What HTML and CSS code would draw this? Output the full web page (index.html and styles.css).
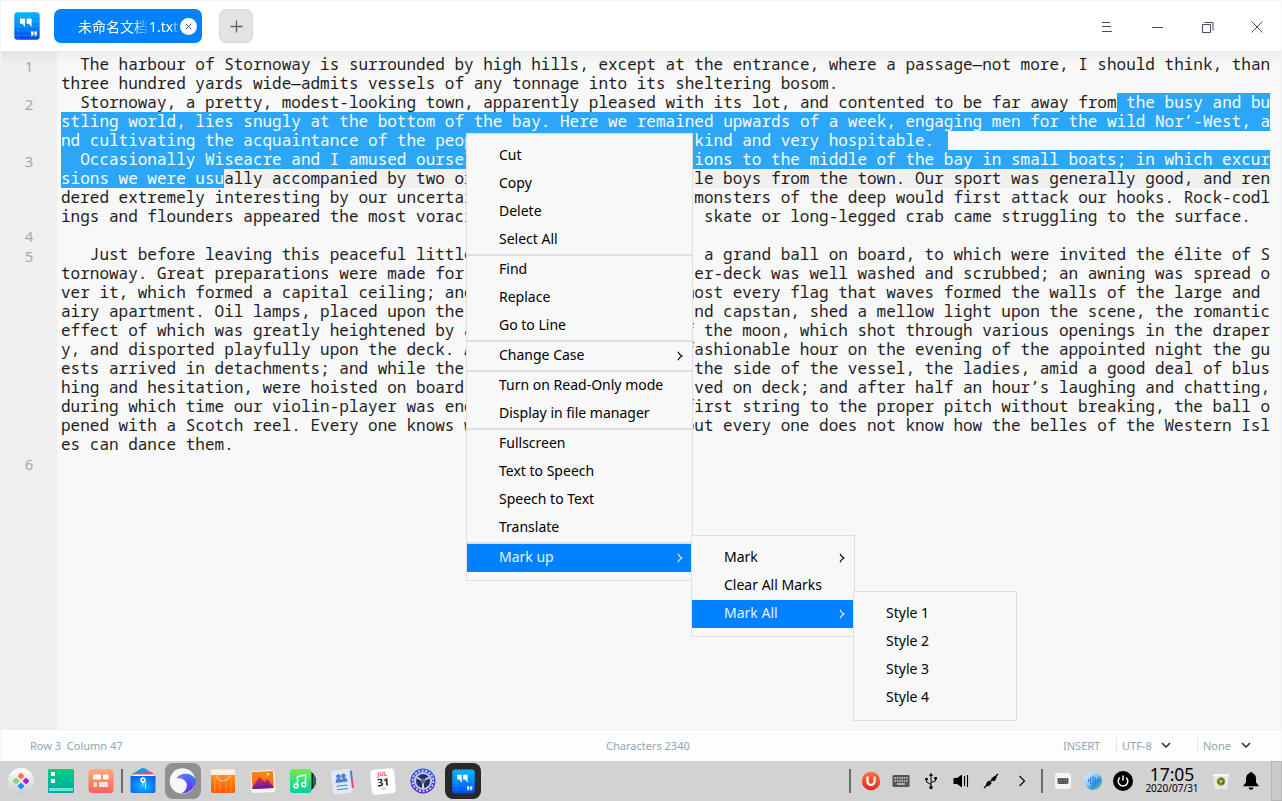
FILE: index.html
```html
<!DOCTYPE html>
<html lang="en">
<head>
<meta charset="utf-8">
<title>Text Editor</title>
<link rel="stylesheet" href="styles.css">
</head>
<body>
<svg class="defs" width="0" height="0">
  <defs>
    <linearGradient id="gEd" x1="0" y1="0" x2="0" y2="1"><stop offset="0" stop-color="#00b4ff"/><stop offset=".5" stop-color="#0088ff"/><stop offset="1" stop-color="#0046e8"/></linearGradient>
    <linearGradient id="gTeal" x1="0" y1="0" x2="0" y2="1"><stop offset="0" stop-color="#00d074"/><stop offset="1" stop-color="#00a7b8"/></linearGradient>
    <linearGradient id="gPeach" x1="0" y1="0" x2="0" y2="1"><stop offset="0" stop-color="#ffad78"/><stop offset="1" stop-color="#fd605c"/></linearGradient>
    <linearGradient id="gGrey" x1="0" y1="0" x2="0" y2="1"><stop offset="0" stop-color="#fff"/><stop offset="1" stop-color="#c4ced2"/></linearGradient>
    <radialGradient id="gFile" cx=".5" cy=".6" r=".6"><stop offset="0" stop-color="#1fb7ff"/><stop offset="1" stop-color="#0566f2"/></radialGradient>
    <linearGradient id="gWave" x1="0" y1="0" x2="1" y2="1"><stop offset="0" stop-color="#8d7bff"/><stop offset=".5" stop-color="#4b5bff"/><stop offset="1" stop-color="#7a10ff"/></linearGradient>
    <linearGradient id="gBag" x1="0" y1="0" x2="0" y2="1"><stop offset="0" stop-color="#ff9a1e"/><stop offset="1" stop-color="#ff5400"/></linearGradient>
    <linearGradient id="gSun" x1="0" y1="0" x2="0" y2="1"><stop offset="0" stop-color="#f58a12"/><stop offset="1" stop-color="#f9601e"/></linearGradient>
    <linearGradient id="gMt" x1="0" y1="0" x2="0" y2="1"><stop offset="0" stop-color="#f0383c"/><stop offset="1" stop-color="#5b12b8"/></linearGradient>
    <linearGradient id="gMus" x1="0" y1="0" x2="0" y2="1"><stop offset="0" stop-color="#73ec4a"/><stop offset="1" stop-color="#00cfa8"/></linearGradient>
    <linearGradient id="gGear" x1="0" y1="0" x2="0" y2="1"><stop offset="0" stop-color="#2a55e8"/><stop offset="1" stop-color="#4a20d8"/></linearGradient>
    <linearGradient id="gU" x1="0" y1="0" x2="0" y2="1"><stop offset="0" stop-color="#ff7040"/><stop offset="1" stop-color="#e52a20"/></linearGradient>
    <linearGradient id="gVoice" x1="0" y1="0" x2="1" y2="1"><stop offset="0" stop-color="#e6f3fb"/><stop offset=".45" stop-color="#8fd0f5"/><stop offset=".65" stop-color="#2f8fe8"/><stop offset="1" stop-color="#7be04a"/></linearGradient>
    <symbol id="edicon" viewBox="0 0 26 28">
      <rect x=".3" y=".3" width="25.4" height="27.4" rx="3.2" fill="url(#gEd)"/>
      <path d="M0 4.500h26M0 9.500h26M0 14.500h26M0 19h26M0 23.500h26M4.500 0v28" stroke="#7fd4ff" stroke-opacity=".25" stroke-width=".7"/>
      <path d="M6 6.400h5v8.600L8.400 11.800H6zM12.600 6.400h5v8.600L15 11.800h-2.400z" fill="#fff"/>
      <path d="M17 19.600h2.600v2.600l-1.500 2H17l.8-2H17zM20.400 19.600H23v2.600l-1.500 2h-1.100l.8-2h-.8z" fill="#fff"/>
    </symbol>
    <symbol id="chev" viewBox="0 0 6 10"><path d="M1 .7q1 2.800 4 4.300q-3 1.500-4 4.300" fill="none" stroke="currentColor" stroke-width="1.100"/></symbol>
    <symbol id="down" viewBox="0 0 10 6"><path d="M1 1l4 4 4-4" fill="none" stroke="currentColor" stroke-width="1.600"/></symbol>
  </defs>
</svg>

<div class="window">
  <header class="titlebar">
    <svg class="app-logo" width="26" height="28"><use href="#edicon"/></svg>
    <div class="tab">
      <span class="tab-name">未命名文档</span><span class="tab-ext">1.txt</span>
      <span class="tab-close"><svg width="7" height="7" viewBox="0 0 7 7"><path d="M.7.7l5.600 5.600M6.300.7L.7 6.300" stroke="#455060" stroke-width="1"/></svg></span>
    </div>
    <div class="add"><svg width="13" height="13" viewBox="0 0 13 13"><path d="M6.500.5v12M.5 6.500h12" stroke="#5a6478" stroke-width="1.300"/></svg></div>
    <div class="controls">
      <svg width="12" height="14" viewBox="0 0 12 14"><path d="M1 3.500h8M1 7.500h9M1 12.500h10" stroke="#414d68"/></svg>
      <svg width="12" height="14" viewBox="0 0 12 14"><path d="M1 8.500h11" stroke="#414d68"/></svg>
      <svg width="13" height="14" viewBox="0 0 13 14"><path d="M1.500 5.500h8v8h-8zM3.500 3.500h8.500v8" fill="none" stroke="#414d68"/></svg>
      <svg width="12" height="14" viewBox="0 0 12 14"><path d="M.5 2.500l11 11M11.500 2.500l-11 11" stroke="#414d68"/></svg>
    </div>
  </header>

  <main class="editor">
    <div class="gutter">
      <span class="n two">1</span><span class="n three">2</span><span class="n six">3</span><span class="n one">4</span><span class="n eleven">5</span><span class="n">6</span>
    </div>
    <div class="text">
      <div class="row"><span>  The harbour of Stornoway is surrounded by high hills, except at the entrance, where a passage—not more, I should think, than</span></div>
      <div class="row"><span>three hundred yards wide—admits vessels of any tonnage into its sheltering bosom.</span></div>
      <div class="row"><span>  Stornoway, a pretty, modest-looking town, apparently pleased with its lot, and contented to be far away from</span><span class="sel"> the busy and bu</span></div>
      <div class="row"><span class="sel">stling world, lies snugly at the bottom of the bay. Here we remained upwards of a week, engaging men for the wild Nor’-West, a</span></div>
      <div class="row"><span class="sel head">nd cultivating the acquaintance of the peop</span><span class="sel eol">kind and very hospitable. </span></div>
      <div class="row"><span class="sel head">  Occasionally Wiseacre and I amused oursel</span><span class="sel">ions to the middle of the bay in small boats; in which excur</span></div>
      <div class="row current"><span class="head"><span class="sel">sions we were usu</span>ally accompanied by two or</span><span>le boys from the town. Our sport was generally good, and ren</span></div>
      <div class="row"><span class="head">dered extremely interesting by our uncertai</span><span>monsters of the deep would first attack our hooks. Rock-codl</span></div>
      <div class="row"><span class="head">ings and flounders appeared the most voraci</span><span> skate or long-legged crab came struggling to the surface.</span></div>
      <div class="row"></div>
      <div class="row"><span class="head">   Just before leaving this peaceful little</span><span> a grand ball on board, to which were invited the élite of S</span></div>
      <div class="row"><span class="head">tornoway. Great preparations were made for </span><span>er-deck was well washed and scrubbed; an awning was spread o</span></div>
      <div class="row"><span class="head short">ver it, which formed a capital ceiling; and</span><span>most every flag that waves formed the walls of the large and</span></div>
      <div class="row"><span class="head">airy apartment. Oil lamps, placed upon the </span><span>nd capstan, shed a mellow light upon the scene, the romantic</span></div>
      <div class="row"><span class="head short">effect of which was greatly heightened by a</span><span>f the moon, which shot through various openings in the draper</span></div>
      <div class="row"><span class="head short">y, and disported playfully upon the deck. A</span><span>fashionable hour on the evening of the appointed night the gu</span></div>
      <div class="row"><span class="head">ests arrived in detachments; and while the </span><span>the side of the vessel, the ladies, amid a good deal of blus</span></div>
      <div class="row"><span class="head">hing and hesitation, were hoisted on board </span><span>ved on deck; and after half an hour’s laughing and chatting,</span></div>
      <div class="row"><span class="head short">during which time our violin-player was end</span><span>first string to the proper pitch without breaking, the ball o</span></div>
      <div class="row"><span class="head short">pened with a Scotch reel. Every one knows w</span><span>but every one does not know how the belles of the Western Isl</span></div>
      <div class="row"><span>es can dance them.</span></div>
    </div>
  </main>

  <footer class="status">
    <span class="pos">Row 3&nbsp; Column 47</span>
    <span class="chars">Characters 2340</span>
    <div class="modes">
      <span class="mode-ins">INSERT</span>
      <span class="mode enc">UTF-8<svg width="10" height="6"><use href="#down"/></svg></span>
      <span class="mode hl">None<svg width="10" height="6"><use href="#down"/></svg></span>
    </div>
  </footer>
</div>

<nav class="taskbar">
  <div class="dock">
    <div class="slot"><svg width="28" height="28" viewBox="0 0 28 28"><circle cx="14" cy="14" r="13" fill="url(#gGrey)"/><rect x="11.500" y="6.500" width="5" height="5" rx="1" transform="rotate(45 14 9)" fill="#ff7043"/><rect x="6.500" y="11.500" width="5" height="5" rx="1" transform="rotate(45 9 14)" fill="#8fd16a"/><rect x="16.500" y="11.500" width="5" height="5" rx="1" transform="rotate(45 19 14)" fill="#b517e0"/><rect x="11.500" y="16.500" width="5" height="5" rx="1" transform="rotate(45 14 19)" fill="#1a8cf0"/></svg></div>
    <div class="slot"><svg width="28" height="28" viewBox="0 0 28 28"><rect x="1" y="2" width="26" height="24" rx="1.500" fill="url(#gTeal)"/><path d="M4 5h4v4H4zM4 12h4v4H4z" fill="#fff"/><path d="M2 21h24v3H2z" fill="#70e8c4"/></svg></div>
    <div class="slot"><svg width="28" height="28" viewBox="0 0 28 28"><rect x="1.500" y="2" width="25" height="24" rx="4" fill="url(#gPeach)"/><g fill="#fff"><rect x="6" y="7.500" width="8" height="5" rx="1"/><rect x="16" y="7.500" width="5.500" height="5" rx="1"/><rect x="6.500" y="15" width="3.500" height="5" rx="1" opacity=".7"/><rect x="12" y="15" width="9" height="5" rx="1" opacity=".8"/></g></svg></div>
    <i class="bar dock-bar"></i>
    <div class="slot"><svg width="28" height="28" viewBox="0 0 28 28"><path d="M2 8L12 1.500q2-1 4 0L26 8z" fill="#0a9cf5"/><path d="M4 6l19-1 2 4H4z" fill="#ef4a66"/><path d="M4 7.500h21V10H4z" fill="#fff"/><path d="M1.500 9h25v15q0 2-2 2h-21q-2 0-2-2z" fill="url(#gFile)"/><path d="M14 15v3.500M16.500 15v7" stroke="#bde4ff" stroke-width="1.100"/><circle cx="14" cy="13" r="1.900" fill="none" stroke="#fff" stroke-width="1.500"/></svg></div>
    <div class="slot on"><svg width="28" height="28" viewBox="0 0 28 28"><circle cx="13.500" cy="14" r="12.800" fill="#f6f7f8"/><path d="M7.500 11C11 5.500 22 4.500 26.800 12.500 27 20 21 26.500 12 26.600c8-3.600 9-15.600-4.500-15.600z" fill="url(#gWave)"/><path d="M12 9.500c8-1.500 11 3 11 11 2-3 3-5 2.500-8C22 6 16 6.500 12 9.500z" fill="#367df2" opacity=".8"/></svg></div>
    <div class="slot"><svg width="28" height="28" viewBox="0 0 28 28"><path d="M2 6h24v18q0 2-2 2H4q-2 0-2-2z" fill="url(#gBag)"/><path d="M6 9v17M11 9v17M17 9v17M22 9v17" stroke="#ffa04a" stroke-opacity=".4" stroke-width="2"/><path d="M2 3.500q0-1 1-1h22q1 0 1 1V8H2z" fill="#fff1e4"/><path d="M7 6.500C8 16.500 20 16.500 21 6.500" fill="none" stroke="#f6d2b4" stroke-width="1.200"/></svg></div>
    <div class="slot"><svg width="28" height="28" viewBox="0 0 28 28"><g transform="rotate(-3 14 14)"><rect x="2" y="3.500" width="24" height="22" rx="3" fill="#fff7ee"/><rect x="3" y="4.500" width="21.500" height="17" rx="1" fill="url(#gSun)"/><path d="M3 20.500L10.500 9l5 6 3-3 6 9.500H3z" fill="url(#gMt)"/><circle cx="19.500" cy="7.500" r="1.200" fill="#ffe8c0"/></g></svg></div>
    <div class="slot"><svg width="28" height="28" viewBox="0 0 28 28"><circle cx="16" cy="14" r="11" fill="#12151a"/><path d="M24 7q3 3 3 7t-3 7z" fill="#1a6e54"/><rect x="1" y="2" width="21.500" height="24" rx="3" fill="url(#gMus)"/><path d="M8.500 19V9.500l8-1.500v9.500" fill="none" stroke="#fff" stroke-width="1.500"/><circle cx="7" cy="19" r="2" fill="none" stroke="#fff" stroke-width="1.300"/><circle cx="14.800" cy="17.700" r="2" fill="none" stroke="#fff" stroke-width="1.300"/></svg></div>
    <div class="slot"><svg width="28" height="28" viewBox="0 0 28 28"><g transform="rotate(-7 14 14)"><path d="M20 5h4v5h-4z" fill="#3380e8"/><path d="M20 10h4v5h-4z" fill="#8c55d8"/><path d="M20 15h4v7h-4z" fill="#f04a5c"/><rect x="3" y="2.500" width="19" height="24" rx="2.500" fill="#dfe8fb"/><g fill="#4a7fd4"><circle cx="10" cy="9" r="2.300"/><circle cx="15" cy="9" r="2.300"/><path d="M6.500 15q0-4 3.500-4t3 2q0-2 2-2 3.500 0 3.500 4z"/><path d="M7 18h11v1H7zM7 21.500h11v1H7z"/></g></g></svg></div>
    <div class="slot"><div class="cal"><b>JUL</b><strong>31</strong><small>FRI</small></div></div>
    <div class="slot"><svg width="28" height="28" viewBox="0 0 28 28"><circle cx="14" cy="14" r="12.500" fill="url(#gGear)"/><circle cx="14" cy="14" r="10.400" fill="none" stroke="#d5ddf2" stroke-width="1.800" stroke-dasharray="2.200 1.430"/><circle cx="14" cy="14" r="9" fill="#c6cfe0"/><circle cx="14" cy="14" r="7" fill="#233062"/><path d="M14 14V21M14 14L8 10.500M14 14L20 10.500" stroke="#cbd4e8" stroke-width="2"/><circle cx="14" cy="14" r="2.500" fill="#5f6d98"/></svg></div>
    <div class="slot on dark"><svg width="23" height="25"><use href="#edicon"/></svg></div>
  </div>
  <div class="tray">
    <i class="bar first"></i>
    <svg width="20" height="20" viewBox="0 0 20 20"><circle cx="10" cy="10" r="9.200" fill="url(#gU)"/><path d="M6.500 5.500v5a3.500 3.500 0 0 0 7 0v-5" fill="none" stroke="#fff" stroke-width="2.200"/></svg>
    <svg width="18" height="20" viewBox="0 0 18 20"><rect x=".5" y="4" width="17" height="12" rx="1.200" fill="#555"/><path d="M2.500 7h13M2.500 10h13" stroke="#d2d2d2" stroke-width="1.500" stroke-dasharray="1.500 .8"/><path d="M5 13h8" stroke="#d2d2d2" stroke-width="1.500"/></svg>
    <svg width="14" height="18" viewBox="0 0 14 18"><path d="M7 3v12M7 12.500L2.500 10V7.500M7 10.500l4.500-1.500V6.500" fill="none" stroke="#000" stroke-width="1"/><path d="M7 .7L9 4H5z"/><circle cx="7" cy="15.500" r="1.700"/><circle cx="2.500" cy="7.200" r="1.400"/><path d="M10.300 5h2.600v2.600h-2.600z"/></svg>
    <svg width="18" height="16" viewBox="0 0 18 16"><path d="M1.500 5h3.500L10 1.500v13L5 11H1.500z"/><path d="M12.500 3v10M15.500 2v12" stroke="#000" stroke-width="1.100"/></svg>
    <svg width="16" height="16" viewBox="0 0 16 16"><path d="M1 15L15 1" stroke="#000" stroke-width="1.200"/><path d="M3 12.500q0-3.500 3-5l2.700 2.700q-2 3-5 3zM8 6q2-3 5.500-3.500.5 4-3 6z"/></svg>
    <svg width="8" height="12" viewBox="0 0 8 12"><path d="M1.500 1l5 5-5 5" fill="none" stroke="#111" stroke-width="1.300"/></svg>
    <i class="bar"></i>
    <svg width="16" height="18" viewBox="0 0 16 18"><rect y="1" width="16" height="16" rx="3" fill="#f4f4f4"/><rect x="2.500" y="6" width="11" height="6" fill="#777"/><path d="M3 7.500h10M3 9.500h10M4.500 11.300h7" stroke="#222" stroke-dasharray="1 .8"/></svg>
    <svg width="18" height="18" viewBox="0 0 18 18"><circle cx="9" cy="9" r="9" fill="url(#gVoice)"/><path d="M4.500 7v3M6.700 5v7M9 3.500V14M11.200 5v7M13.500 7v3" stroke="#297fd8" stroke-width="1.200"/></svg>
    <svg width="20" height="20" viewBox="0 0 20 20"><circle cx="10" cy="10" r="10"/><path d="M7 6.500a4.800 4.800 0 1 0 6 0M10 4.500v5" fill="none" stroke="#fff" stroke-width="1.500"/></svg>
    <div class="clock"><span class="time">17:05</span><span class="date">2020/07/31</span></div>
    <svg width="16" height="17" viewBox="0 0 16 17"><path d="M0 1h16l-1.800 15H1.800z" fill="#e6e9e6"/><path d="M0 1h16v2H.3z" fill="#f7f8f7"/><circle cx="8" cy="8.500" r="2.700" fill="#c7d59c" stroke="#8a9c1c" stroke-width="3"/><circle cx="8" cy="8.500" r="2.600" fill="none" stroke="#47611a" stroke-width="1.300" stroke-dasharray="3.500 1.950"/></svg>
    <svg width="16" height="18" viewBox="0 0 16 18"><path d="M8 0q1.500 0 1.500 1.300Q13 2.500 13 6.500v4l2.500 2.700v1H.5v-1L3 10.500v-4q0-4 3.500-5.200Q6.500 0 8 0zM5.500 15.500h5q-.5 2.300-2.500 2.300t-2.500-2.300z"/></svg>
    <div class="desktop"></div>
  </div>
</nav>

<ul class="menu main-menu">
  <li>Cut</li><li>Copy</li><li>Delete</li><li>Select All</li>
  <li class="sep"></li>
  <li>Find</li><li>Replace</li><li>Go to Line</li>
  <li class="sep"></li>
  <li>Change Case<svg width="6" height="10"><use href="#chev"/></svg></li>
  <li class="sep"></li>
  <li>Turn on Read-Only mode</li><li>Display in file manager</li>
  <li class="sep"></li>
  <li>Fullscreen</li><li>Text to Speech</li><li>Speech to Text</li><li>Translate</li>
  <li class="sep"></li>
  <li class="active">Mark up<svg width="6" height="10"><use href="#chev"/></svg></li>
</ul>
<ul class="menu mark-menu">
  <li>Mark<svg width="6" height="10"><use href="#chev"/></svg></li>
  <li>Clear All Marks</li>
  <li class="active">Mark All<svg width="6" height="10"><use href="#chev"/></svg></li>
</ul>
<ul class="menu style-menu">
  <li>Style 1</li><li>Style 2</li><li>Style 3</li><li>Style 4</li>
</ul>
</body>
</html>
```

FILE: styles.css
```css
* { box-sizing: border-box; }
body {
  margin: 0;
  width: 1282px;
  height: 801px;
  overflow: hidden;
  display: flex;
  flex-direction: column;
  font-family: "Noto Sans", "Noto Sans CJK SC", sans-serif;
}
svg { display: block; flex: none; }
.defs { position: absolute; }

.window {
  flex: 1;
  display: flex;
  flex-direction: column;
  border: solid #f3f3f3;
  border-width: 1px 1px 0;
  min-height: 0;
}
.titlebar {
  height: 50px;
  flex: none;
  display: flex;
  align-items: center;
  background: #fff;
  padding-left: 13px;
}
.tab {
  display: flex;
  align-items: center;
  width: 148px;
  height: 34px;
  margin-left: 14px;
  padding: 0 5px 0 24px;
  border-radius: 7px;
  background: #0081ff;
  color: #fff;
  font-size: 14px;
  white-space: nowrap;
}
.tab-name {
  width: 71px;
  -webkit-mask-image: linear-gradient(90deg, #000 55px, transparent 72px);
  mask-image: linear-gradient(90deg, #000 55px, transparent 72px);
}
.tab-ext {
  -webkit-mask-image: linear-gradient(90deg, #000 20px, rgba(0, 0, 0, .15) 30px);
  mask-image: linear-gradient(90deg, #000 20px, rgba(0, 0, 0, .15) 30px);
}
.tab-close {
  display: flex;
  align-items: center;
  justify-content: center;
  width: 17px;
  height: 17px;
  margin-left: auto;
  border-radius: 50%;
  background: #fff;
}
.add {
  display: flex;
  align-items: center;
  justify-content: center;
  width: 34px;
  height: 34px;
  margin-left: 17px;
  border: 1px solid #d6d6d6;
  border-radius: 7px;
  background: #e3e3e3;
}
.controls {
  display: grid;
  grid-template-columns: repeat(4, 50px);
  margin-left: auto;
  margin-right: -20px;
}

.editor {
  flex: 1;
  display: flex;
  min-height: 0;
  background: linear-gradient(#ededed, #f8f8f8 14px);
}
.gutter {
  width: 56px;
  display: flex;
  flex-direction: column;
  align-items: center;
  padding-top: 5px;
  background: linear-gradient(#e4e4e4, #efefef 14px);
  color: #a8a8a8;
  font-size: 15px;
  line-height: 20px;
}
.n { height: 20px; flex: none; }
.two { height: 38px; }
.three { height: 57px; }
.six { height: 75px; }
.eleven { height: 208px; }
.text {
  flex: 1;
  padding: 4px 9px 0 4px;
  font: 16px/19px "Noto Sans Mono", "DejaVu Sans Mono", monospace;
  letter-spacing: -.004px;
  color: #1d1d1d;
}
.row { display: flex; height: 19px; }
.row span { white-space: pre; }
.row > span { display: block; flex: none; height: 19px; }
.current { background: #f0f0f0; }
.head { width: 633.3px; }
.short { width: 623.7px; }
.sel { background: #2ca7f8; color: #f7fbff; }
.current .sel { display: inline-block; height: 19px; vertical-align: top; }
.eol { padding-right: 4px; }

.status {
  height: 32px;
  flex: none;
  display: flex;
  align-items: center;
  background: #fdfdfd;
  border-top: 1px solid #f0f0f0;
  padding: 0 30px 1px 29px;
  color: #8fa6b9;
  font-size: 11px;
}
.pos { width: 576px; }
.modes { display: flex; align-items: center; margin-left: auto; }
.mode-ins { width: 53px; }
.mode { display: flex; align-items: center; height: 15px; border-left: 1px solid #e5e5e5; padding-left: 5px; }
.mode svg { margin-left: auto; color: #30363c; }
.enc { width: 55px; margin-right: 26px; }
.hl { width: 54px; }

.taskbar {
  height: 40px;
  flex: none;
  display: flex;
  justify-content: space-between;
  background: #d2d2d2;
}
.dock { display: flex; align-items: center; padding-left: 3px; gap: 4px; }
.slot { display: flex; align-items: center; justify-content: center; width: 36px; height: 36px; border-radius: 8px; }
.on { background: #909090; }
.dark { background: #292929; }
.bar { width: 2px; height: 24px; background: #6a6a6a; flex: none; }
.dock-bar { margin: 0 -2px; }
.cal {
  width: 24px;
  height: 25px;
  border-radius: 4px;
  background: #fff;
  transform: rotate(-5deg);
  display: flex;
  flex-direction: column;
  align-items: center;
  line-height: 1;
  padding-top: 2px;
}
.cal b { color: #ed4a50; font-size: 6px; }
.cal strong { color: #20242c; font-size: 10.5px; }
.cal small { color: #777; font-size: 3px; }
.tray {
  display: grid;
  grid-template-columns: 7px 30px 30px 30px 29px 32px 29px 12px 30px 29px 32px 66px 32px 28px 17px;
  align-items: center;
  justify-items: center;
}
.first { justify-self: start; }
.clock { display: flex; flex-direction: column; align-items: center; width: 54px; line-height: 1; }
.time { font-size: 17.5px; height: 15px; line-height: 14px; }
.date { font-size: 10px; line-height: 13px; }
.desktop { justify-self: end; width: 11px; height: 40px; border: 1px solid #b4b4b4; background: #cacaca; }

.menu {
  position: absolute;
  margin: 0;
  padding: 8px 0;
  list-style: none;
  background: #f8f8f8;
  border: 1px solid #e0e0e0;
  color: #000;
  font-size: 14px;
}
.menu li {
  display: flex;
  align-items: center;
  justify-content: space-between;
  height: 28px;
  padding: 0 9px 3px 32px;
}
.menu li svg { margin-top: 2px; }
.menu .sep { height: 2px; padding: 0; background: #dfdfdf; }
.menu .active { background: #0081ff; color: #e6f2ff; }
.main-menu { left: 466px; top: 133px; width: 227px; }
.mark-menu { left: 691px; top: 535px; width: 164px; }
.style-menu { left: 853px; top: 591px; width: 164px; }
```
